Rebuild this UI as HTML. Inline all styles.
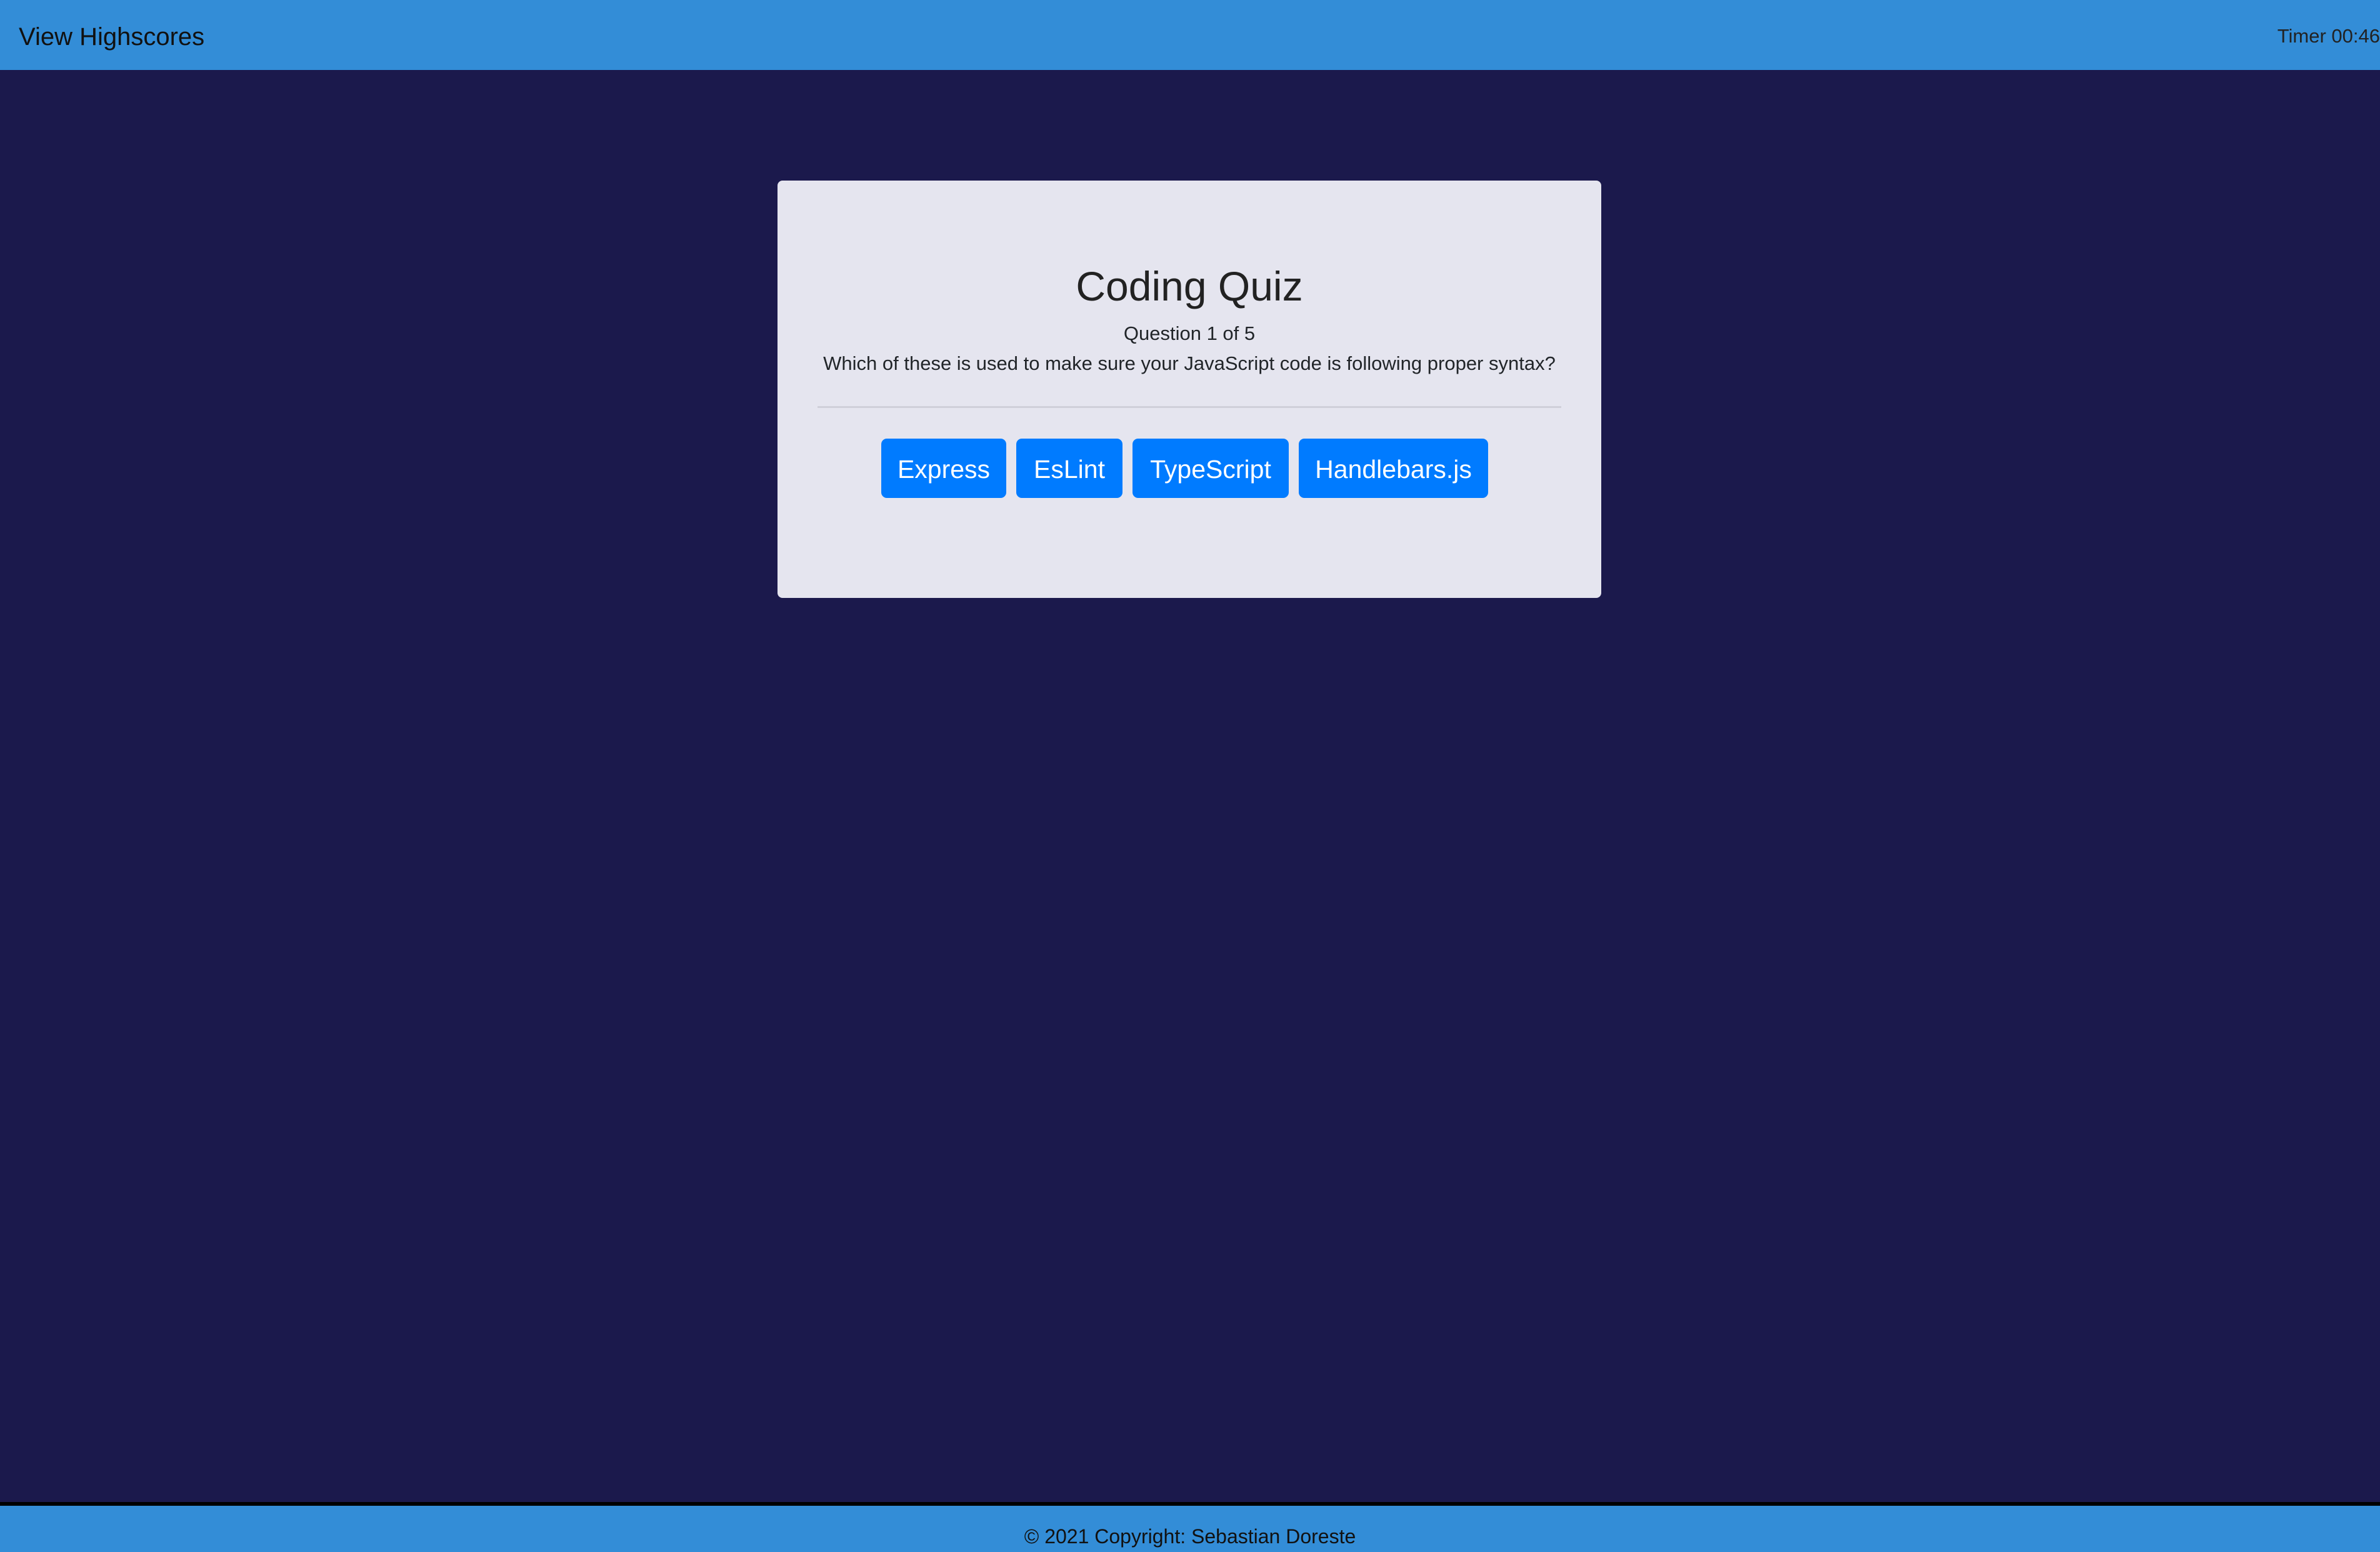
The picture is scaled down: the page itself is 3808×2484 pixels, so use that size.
<!DOCTYPE html>
<html><head><meta charset="utf-8"><style>
*{margin:0;padding:0;box-sizing:border-box}
html,body{width:3808px;height:2484px;overflow:hidden}
body{background:#1b194c;font-family:"Liberation Sans",sans-serif;position:relative;color:#212529}
.nav{position:absolute;left:0;top:0;width:3808px;height:112px;background:#338dd7}
.nav .l{position:absolute;left:30px;top:37px;font-size:40px;color:#111}
.nav .r{position:absolute;right:0;top:40px;font-size:31px;color:#222}
.card{position:absolute;left:1244px;top:289px;width:1318px;height:668px;background:#e5e5ef;border-radius:8px;text-align:center}
h1{position:absolute;top:131px;width:100%;font-size:66px;font-weight:normal;color:#222}
.q1{position:absolute;top:227px;width:100%;font-size:31px}
.q2{position:absolute;top:275px;width:100%;font-size:31px}
hr{position:absolute;left:64px;right:64px;top:361px;border:0;border-top:3px solid #cfcfd9}
.b{position:absolute;top:413px;height:95px;background:#007bff;color:#fff;border-radius:9px;font-size:41px;line-height:99px;text-align:center}
.foot{position:absolute;left:0;top:2404px;width:3808px;height:80px;background:#338dd7;border-top:6px solid #000;text-align:center;font-size:32px;line-height:74px;padding-top:12px;overflow:hidden;color:#111}
</style></head><body>
<div class="nav"><div class="l">View Highscores</div><div class="r">Timer 00:46</div></div>
<div class="card">
<h1>Coding Quiz</h1>
<div class="q1">Question 1 of 5</div>
<div class="q2">Which of these is used to make sure your JavaScript code is following proper syntax?</div>
<hr>
<div class="b" style="left:166px;width:200px">Express</div>
<div class="b" style="left:382px;width:170px">EsLint</div>
<div class="b" style="left:568px;width:250px">TypeScript</div>
<div class="b" style="left:834px;width:303px">Handlebars.js</div>
</div>
<div class="foot">© 2021 Copyright: Sebastian Doreste</div>
</body></html>
